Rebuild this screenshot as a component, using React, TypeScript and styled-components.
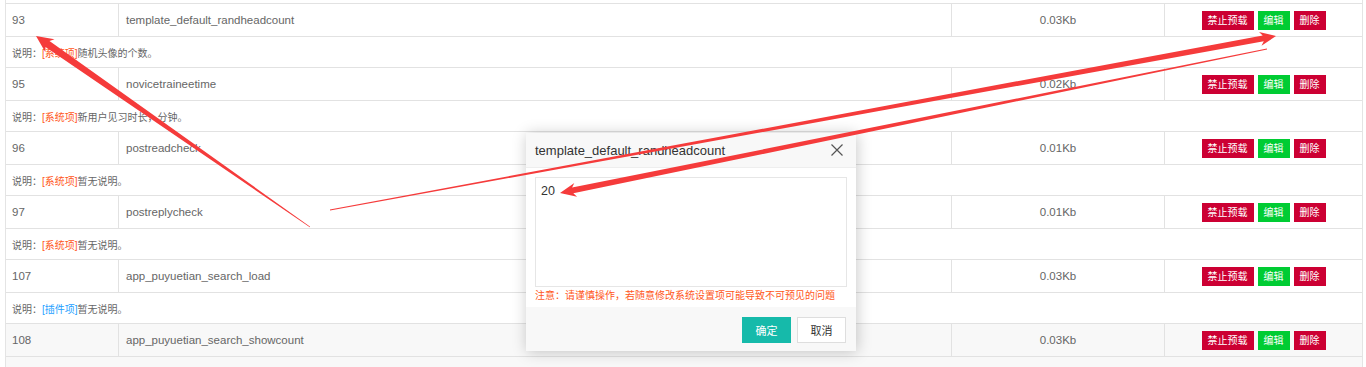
import React from "react";
import styled, { createGlobalStyle } from "styled-components";

const GlobalStyle = createGlobalStyle`
  html, body { margin: 0; padding: 0; background: #fff; }
  body { font-family: "Liberation Sans", "Noto Sans CJK SC", sans-serif; overflow: hidden; }
  * { box-sizing: border-box; }
`;

const Page = styled.div`
  position: relative;
  width: 1366px;
  height: 367px;
  overflow: hidden;
  padding: 0 3px 0 5px;
`;

const Table = styled.div`
  border-left: 1px solid #e4e4e4;
  border-right: 1px solid #e4e4e4;
  padding-top: 3px;
  height: 100%;
`;

const MainRow = styled.div<{ $shade?: boolean }>`
  display: grid;
  grid-template-columns: 113px 833px 213px 1fr;
  height: 33px;
  border-top: 1px solid #e2e2e2;
  background: ${(p) => (p.$shade ? "#f8f8f8" : "#fff")};
`;

const Cell = styled.div<{ $align?: "left" | "center"; $pad?: number; $last?: boolean }>`
  display: flex;
  align-items: center;
  justify-content: ${(p) => (p.$align === "center" ? "center" : "flex-start")};
  padding-left: ${(p) => p.$pad ?? 0}px;
  border-right: ${(p) => (p.$last ? "none" : "1px solid #e2e2e2")};
  font-size: 11.5px;
  color: #666;
  white-space: nowrap;
`;

const DescRow = styled.div<{ $shade?: boolean }>`
  display: flex;
  align-items: center;
  height: 31px;
  border-top: 1px solid #e2e2e2;
  padding-left: 6px;
  font-size: 10px;
  color: #666;
  background: ${(p) => (p.$shade ? "#f8f8f8" : "#fff")};
`;

const Tag = styled.span<{ $kind: "sys" | "plugin" }>`
  color: ${(p) => (p.$kind === "sys" ? "#ff5722" : "#1e9fff")};
`;

const BtnGroup = styled.div`
  display: flex;
  gap: 4px;
`;

const SmallBtn = styled.span<{ $tone: "red" | "green" }>`
  display: inline-block;
  height: 19px;
  line-height: 19px;
  padding: 0 6px;
  font-size: 10px;
  color: #fff;
  background: ${(p) => (p.$tone === "red" ? "#cc0033" : "#00cc33")};
`;

const Dialog = styled.div`
  position: absolute;
  left: 526px;
  top: 133px;
  width: 330px;
  display: flex;
  flex-direction: column;
  background: #fff;
  box-shadow: 1px 1px 14px rgba(0, 0, 0, 0.22);
  z-index: 2;
`;

const DialogTitle = styled.div`
  height: 35px;
  display: flex;
  align-items: center;
  justify-content: space-between;
  padding: 0 13px 0 9px;
  background: #f8f8f8;
  border-bottom: 1px solid #eee;
  font-size: 13px;
  color: #333;
`;

const DialogBody = styled.div`
  display: flex;
  flex-direction: column;
  padding: 9px 9px 5px;
  background: #fff;
`;

const TextBox = styled.textarea`
  width: 312px;
  height: 110px;
  border: 1px solid #e6e6e6;
  padding: 4px 5px;
  margin: 0;
  font-family: "Liberation Sans", "Noto Sans CJK SC", sans-serif;
  font-size: 12.5px;
  line-height: 18px;
  color: #333;
  resize: none;
  outline: none;
`;

const Warning = styled.div`
  margin-top: 3px;
  font-size: 10px;
  line-height: 12px;
  color: #ff5722;
  white-space: nowrap;
`;

const DialogFooter = styled.div`
  display: flex;
  justify-content: flex-end;
  gap: 6px;
  padding: 10px 10px 8px;
  background: #f8f8f8;
`;

const DlgBtn = styled.span<{ $primary?: boolean }>`
  display: flex;
  align-items: center;
  justify-content: center;
  width: 49px;
  height: 26px;
  font-size: 11px;
  border: 1px solid ${(p) => (p.$primary ? "#16baaa" : "#dedede")};
  background: ${(p) => (p.$primary ? "#16baaa" : "#fff")};
  color: ${(p) => (p.$primary ? "#fff" : "#333")};
`;

const Overlay = styled.svg`
  position: absolute;
  left: 0;
  top: 0;
  width: 1366px;
  height: 367px;
  pointer-events: none;
  z-index: 3;
`;

type Row = {
  id: string;
  name: string;
  size: string;
  desc?: { kind: "sys" | "plugin"; text: string };
  shade?: boolean;
};

const rows: Row[] = [
  { id: "93", name: "template_default_randheadcount", size: "0.03Kb", desc: { kind: "sys", text: "随机头像的个数。" } },
  { id: "95", name: "novicetraineetime", size: "0.02Kb", desc: { kind: "sys", text: "新用户见习时长，分钟。" } },
  { id: "96", name: "postreadcheck", size: "0.01Kb", desc: { kind: "sys", text: "暂无说明。" } },
  { id: "97", name: "postreplycheck", size: "0.01Kb", desc: { kind: "sys", text: "暂无说明。" } },
  { id: "107", name: "app_puyuetian_search_load", size: "0.03Kb", desc: { kind: "plugin", text: "暂无说明。" } },
  { id: "108", name: "app_puyuetian_search_showcount", size: "0.03Kb", shade: true },
];

function arrowPoints(tx: number, ty: number, hx: number, hy: number, ws: number, hl: number, hw: number) {
  const dx = hx - tx;
  const dy = hy - ty;
  const len = Math.hypot(dx, dy);
  const ux = dx / len;
  const uy = dy / len;
  const nx = -uy;
  const ny = ux;
  const bx = hx - ux * hl;
  const by = hy - uy * hl;
  const wx = hx - ux * (hl + 3);
  const wy = hy - uy * (hl + 3);
  const pts: [number, number][] = [
    [tx + nx * 0.4, ty + ny * 0.4],
    [bx + nx * (ws / 2), by + ny * (ws / 2)],
    [wx + nx * hw, wy + ny * hw],
    [hx, hy],
    [wx - nx * hw, wy - ny * hw],
    [bx - nx * (ws / 2), by - ny * (ws / 2)],
    [tx - nx * 0.4, ty - ny * 0.4],
  ];
  return pts.map((p) => `${p[0].toFixed(1)},${p[1].toFixed(1)}`).join(" ");
}

function Arrows() {
  return (
    <Overlay viewBox="0 0 1366 367">
      <polygon points={arrowPoints(310, 227, 36, 36, 7, 14, 8)} fill="#f53b3b" />
      <polygon points={arrowPoints(330, 210, 1276, 36, 6, 13, 7)} fill="#f53b3b" />
      <polygon points={arrowPoints(1267, 49, 560, 193, 6, 13, 7)} fill="#f53b3b" />
    </Overlay>
  );
}

function CloseIcon() {
  return (
    <svg width="12" height="12" viewBox="0 0 12 12">
      <path d="M0.5 0.5 L11.5 11.5 M11.5 0.5 L0.5 11.5" stroke="#555" strokeWidth="1.2" fill="none" />
    </svg>
  );
}

export default function App() {
  return (
    <>
      <GlobalStyle />
      <Page>
        <Table>
          {rows.map((r) => (
            <React.Fragment key={r.id}>
              <MainRow $shade={r.shade}>
                <Cell $pad={6}>{r.id}</Cell>
                <Cell $pad={7}>{r.name}</Cell>
                <Cell $align="center">{r.size}</Cell>
                <Cell $align="center" $last>
                  <BtnGroup>
                    <SmallBtn $tone="red">禁止预载</SmallBtn>
                    <SmallBtn $tone="green">编辑</SmallBtn>
                    <SmallBtn $tone="red">删除</SmallBtn>
                  </BtnGroup>
                </Cell>
              </MainRow>
              {r.desc && (
                <DescRow>
                  说明：<Tag $kind={r.desc.kind}>[{r.desc.kind === "sys" ? "系统项" : "插件项"}]</Tag>
                  {r.desc.text}
                </DescRow>
              )}
            </React.Fragment>
          ))}
          <DescRow $shade />
        </Table>
        <Dialog>
          <DialogTitle>
            <span>template_default_randheadcount</span>
            <CloseIcon />
          </DialogTitle>
          <DialogBody>
            <TextBox defaultValue="20" />
            <Warning>注意：请谨慎操作，若随意修改系统设置项可能导致不可预见的问题</Warning>
          </DialogBody>
          <DialogFooter>
            <DlgBtn $primary>确定</DlgBtn>
            <DlgBtn>取消</DlgBtn>
          </DialogFooter>
        </Dialog>
        <Arrows />
      </Page>
    </>
  );
}
